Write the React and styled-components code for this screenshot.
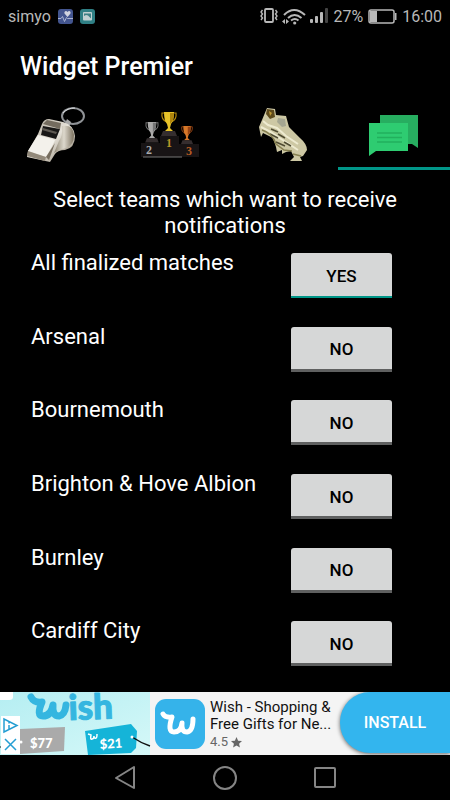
import React, { useState } from 'react';
import styled, { createGlobalStyle } from 'styled-components';

const GlobalStyle = createGlobalStyle`
  * {
    box-sizing: border-box;
  }

  body {
    margin: 0;
    background: #000;
    color: #fff;
    font-family: Roboto, "Liberation Sans", sans-serif;
  }

  h1, h2, p {
    margin: 0;
  }

  button {
    font-family: inherit;
    border: 0;
    padding: 0;
    cursor: pointer;
  }

  svg {
    display: block;
    flex: none;
    overflow: visible;
  }
`;

const Screen = styled.div`
  min-height: 100vh;
  display: flex;
  flex-direction: column;
`;

const StatusBar = styled.header`
  height: 32px;
  padding: 0 8px;
  display: flex;
  align-items: center;
  justify-content: space-between;
  color: #b8b8b8;
  font-size: 16px;
`;

const StatusGroup = styled.div`
  display: flex;
  align-items: center;
  gap: ${(props) => props.$gap}px;
`;

const Title = styled.h1`
  height: 66px;
  padding: 0 20px;
  font-size: 25px;
  font-weight: 500;
  line-height: 70px;
`;

const Tabs = styled.nav`
  display: grid;
  grid-template-columns: repeat(4, 1fr);
`;

const Tab = styled.button`
  height: 72px;
  padding-top: 2px;
  display: flex;
  align-items: center;
  justify-content: center;
  background: none;
  border-bottom: 3px solid ${(props) => (props.$active ? '#009688' : 'transparent')};
`;

const Heading = styled.h2`
  padding: 17px 40px 9px;
  font-size: 22px;
  font-weight: 400;
  line-height: 26px;
  text-align: center;
`;

const TeamList = styled.main`
  flex: 1;
  padding-bottom: 2px;
  display: flex;
  flex-direction: column;
`;

const TeamRow = styled.div`
  flex: 1;
  min-height: 64px;
  padding: 5px 58px 0 31px;
  display: flex;
  align-items: flex-start;
  justify-content: space-between;
`;

const TeamName = styled.span`
  font-size: 22px;
  line-height: 26px;
  margin-top: -3px;
`;

const Toggle = styled.button`
  width: 101px;
  height: 45px;
  padding-top: 3px;
  flex: none;
  border-radius: 3px 3px 0 0;
  border-bottom: ${(props) => (props.$on ? '2px solid #009688' : '3px solid #5f6060')};
  background: #d6d7d7;
  color: #000;
  font-size: 17px;
  font-weight: 500;
`;

const Ad = styled.aside`
  height: 63px;
  display: flex;
  background: #f4f4f4;
  color: #111;
`;

const AdBody = styled.div`
  flex: 1;
  min-width: 0;
  padding: 0 5px;
  display: flex;
  align-items: center;
  gap: 5px;
`;

const AdText = styled.div`
  padding-top: 3px;
  font-size: 15px;
  line-height: 17px;
  white-space: nowrap;
`;

const Rating = styled.p`
  display: flex;
  align-items: center;
  gap: 3px;
  color: #666;
  font-size: 13px;
  line-height: 18px;
`;

const Install = styled.button`
  width: 110px;
  height: 61px;
  flex: none;
  border-radius: 30px 0 0 30px;
  background: #33b5ee;
  box-shadow: 0 1px 4px #0009;
  color: #fff;
  font-size: 16px;
  font-weight: 500;
`;

const NavBar = styled.footer`
  height: 45px;
  display: flex;
  align-items: center;
  justify-content: center;
  gap: 70px;
`;

const NavButton = styled.button`
  background: none;
`;

const HealthIcon = () => (
  <svg width="15" height="15" viewBox="0 0 15 15">
    <rect width="15" height="15" rx="3" fill="#43558f" />
    <path d="M9.500 8 6.500 4.500C5.800 2.300 8.300 1.200 9.500 3 10.900 1.200 13.200 2.300 12.500 4.500Z" fill="#d0d3df" />
    <path d="M0 9.500h3l1.500-2 2 5 2-4 1 1H15" fill="none" stroke="#aab4d2" strokeWidth="1" />
  </svg>
);

const GalleryIcon = () => (
  <svg width="15" height="15" viewBox="0 0 15 15">
    <rect width="15" height="15" rx="3" fill="#2f7f84" />
    <rect x="3" y="3" width="9" height="8.500" rx="1" fill="#c0d0d1" />
    <path d="M4 4.500h7v5L8 6.500 6 6 4 7Z" fill="#3c7f84" />
  </svg>
);

const VibrateIcon = () => (
  <svg width="18" height="16" viewBox="0 0 18 16" fill="none" stroke="#b8b8b8">
    <rect x="5" y="1" width="8" height="13" rx="1" strokeWidth="1.800" />
    <path d="M2.500 2 1 4l1.500 2L1 8l1.500 2L1 12M15.500 2 17 4l-1.500 2L17 8l-1.500 2 1.500 2" strokeWidth="1.400" />
  </svg>
);

const WifiIcon = () => (
  <svg width="24" height="17" viewBox="0 0 24 17" fill="none" stroke="#b8b8b8" strokeWidth="2">
    <path d="M2 7Q12-3 23 7M6 10q6.500-6 13.500 0M9 12.500q4-3 7.500 0" />
    <circle cx="12.700" cy="15" r="1.600" fill="#b8b8b8" stroke="none" />
    <path d="m0 13.500 3-2.500v5zM4 11v5l3-2.500z" fill="#b8b8b8" stroke="none" />
  </svg>
);

const SignalIcon = () => (
  <svg width="19" height="16" viewBox="0 0 19 16" fill="#b8b8b8">
    <rect x="0" y="11" width="3" height="4" rx="1" />
    <rect x="5" y="8" width="3" height="7" rx="1" />
    <rect x="10" y="4" width="3" height="11" rx="1" />
    <rect x="15" y="0" width="3" height="15" rx="1" fill="#444" />
  </svg>
);

const BatteryIcon = () => (
  <svg width="31" height="15" viewBox="-1 0 31 15">
    <rect x="1" y="1" width="25" height="13" rx="2" fill="none" stroke="#b8b8b8" strokeWidth="1.500" />
    <path d="M2 2h7v11H2zM27 4h1.500v7H27z" fill="#b8b8b8" />
  </svg>
);

const WhistleIcon = () => (
  <svg width="62" height="60" viewBox="0 0 62 60">
    <defs>
      <linearGradient id="steel" x1="0" y1="0" x2="1" y2="1">
        <stop offset="0" stopColor="#a9a294" />
        <stop offset=".5" stopColor="#e6e2d9" />
        <stop offset="1" stopColor="#8a806e" />
      </linearGradient>
      <linearGradient id="barrel" x1="0" y1="0" x2="1" y2="0">
        <stop offset="0" stopColor="#8d8573" />
        <stop offset=".5" stopColor="#ddd8cc" />
        <stop offset="1" stopColor="#7b715f" />
      </linearGradient>
    </defs>
    <ellipse cx="48" cy="12" rx="11" ry="8" fill="none" stroke="#8f9296" strokeWidth="2" />
    <path d="M38 9q4-5 12-5" fill="none" stroke="#d5d7da" />
    <path d="m39 22 3-7 4 3-2 5" fill="#a9a9a9" />
    <path d="M17 20q2-5 7-5l14 3q11 3 12 14 0 12-10 14-7 0-10 4l-5 8L2 53l1-6 10-17Z" fill="url(#steel)" />
    <path d="M37 22q11-2 12 9 0 10-8 13-6 1-12 5l5-12q4-5 3-15Z" fill="url(#barrel)" />
    <path d="m18 20 4-4 14 3-1 6Z" fill="#746c5f" />
    <path d="m18 22 17 3-4 10-15-4Z" fill="#181716" />
    <path d="m18 24 14 4-1 2-14-4Z" fill="#5f5a53" />
    <path d="m13 31 17 5q-3 7-9 17L3 47Z" fill="#f3f1eb" />
    <path d="m3 47 18 6-1 4L2 52Z" fill="#92897a" />
    <path d="m21 53 9-14-6 17Z" fill="#766d5e" />
  </svg>
);

const Cup = ({ x, y, scale, color, shade }) => (
  <g transform={`translate(${x} ${y}) scale(${scale})`}>
    <path d="M-5 1h-2q-1 7 5 9M5 1h2q1 7-5 9" fill="none" stroke={shade} strokeWidth="1.200" />
    <path d="M-5 0H5q0 9-3 12l-1 4 3 3h-8l3-3-1-4Q-5 9-5 0Z" fill={color} />
    <path d="M1 1h4q0 8-4 11Z" fill={shade} />
    <path d="M-6 19H6l2 5H-8Z" fill="#352e2f" />
  </g>
);

const PodiumText = styled.text`
  font-family: "Liberation Serif", serif;
  font-size: 12px;
  font-weight: 700;
  text-anchor: middle;
`;

const PodiumIcon = () => (
  <svg width="60" height="56" viewBox="-1 1 60 56">
    <path d="M1 38h19v-7h19v8h20v13H1Z" fill="#181415" />
    <Cup x={12} y={17} scale={0.85} color="#aaa9a8" shade="#747474" />
    <Cup x={29} y={7} scale={1} color="#e8c329" shade="#af850c" />
    <Cup x={47} y={21} scale={0.75} color="#d87829" shade="#974314" />
    <PodiumText x="9" y="49" fill="#aaa">2</PodiumText>
    <PodiumText x="29" y="42" fill="#b99728">1</PodiumText>
    <PodiumText x="49" y="50" fill="#b85c22">3</PodiumText>
    <path d="M3 52h39" stroke="#777" />
  </svg>
);

const BootIcon = () => (
  <svg width="52" height="58" viewBox="-1 0 52 58">
    <path
      d="M11 3l8 1 1 6 10 1 3 11 11 11q7 6 7 12l-4 6-3 1 2 4H34l4-4-3-6-5 1-4 2v-4l-5 2-1-5-3-9-10-5-2 4-2-10 3-7Z"
      fill="#cdc8a4"
    />
    <path d="m11 4 7 1 1 7-5 2-4-5Z" fill="#5d4a1c" />
    <path d="m13 6 3 2-2 3Z" fill="#c09a35" />
    <path d="m22 13 7 1 1 7-4 1-5-5Z" fill="#a5a691" />
    <path d="m7 16 5 4 9 3 9 8 12 8M5 22l10 5 7 5 11 7 9 6" fill="none" stroke="#eeebd0" strokeWidth="2" />
    <path d="m15 24 7 3M14 29l8 4M22 29l7 4M20 37l9 4M28 37l7 4" stroke="#4f4b32" strokeWidth="1.500" />
    <path d="M6 25q10 3 14 14l8 6 8 1M37 49l8 2" fill="none" stroke="#878051" strokeWidth="1.500" />
  </svg>
);

const ChatIcon = () => (
  <svg width="50" height="45" viewBox="0 -4 50 45">
    <path d="M11 0h38v33l-6-4H11Z" fill="#27ae60" />
    <path d="M0 8h39v28H7l-7 5Z" fill="#2ecc71" />
    <path d="M8 18h25M8 22.500h25M8 27h25" stroke="#22b05d" strokeWidth="1.500" />
  </svg>
);

const TagText = styled.text`
  fill: #fff;
  font-family: Lato, sans-serif;
  font-size: ${(props) => props.$size}px;
  font-weight: 900;
`;

const WishText = styled(TagText)`
  fill: #35b6e0;
  stroke: #35b6e0;
  stroke-width: 1px;
  stroke-linejoin: round;
`;

const AdArt = () => (
  <svg width="150" height="63" viewBox="0 0 150 63">
    <defs>
      <linearGradient id="sky" x1="0" y1="0" x2="1" y2="1">
        <stop offset="0" stopColor="#b5eef2" />
        <stop offset="1" stopColor="#d5f8f8" />
      </linearGradient>
    </defs>
    <rect width="150" height="63" fill="url(#sky)" />
    <path d="M0 0h13v5q0 3-4 3H0Z" fill="#fff" />
    <path
      d="M31 5q3 6 11 5-6 14 1 14 8 0 10-11-1 11 6 11 6-1 7-11"
      fill="none"
      stroke="#35b6e0"
      strokeWidth="7"
      strokeLinecap="round"
      strokeLinejoin="round"
    />
    <WishText x="69" y="28" $size={35} transform="rotate(-2 69 28)">ish</WishText>
    <path d="M20 37 65 35l-1 24-44 3Z" fill="#aaa" />
    <path d="M0 55h2" stroke="#111" />
    <circle cx="21" cy="50" r="1.500" fill="#fff" />
    <TagText x="30" y="56" $size={13}>$77</TagText>
    <path d="m85 39 46-7 6 7-1 17-5 5-43 2Z" fill="#15b4d8" />
    <path d="M132 45q9 6 18 9" fill="none" stroke="#111" strokeWidth="1.500" />
    <circle cx="132" cy="45" r="1.500" fill="#fff" />
    <path d="m88 42 3 1q-1 5 1 4 2 0 2-3 0 3 2 2 1 0 1-4" fill="none" stroke="#fff" strokeWidth="1.500" />
    <TagText x="100" y="57" $size={13} transform="rotate(-4 100 57)">$21</TagText>
    <path d="M1 24h19v38H1Z" fill="#fff" />
    <g fill="none" stroke="#249ed3" strokeWidth="1.500">
      <path d="M4 27v13l13-6.500ZM9 33v4M9 30v1.500M5 47l11 11M16 47 5 58" />
    </g>
  </svg>
);

const WishIcon = () => (
  <svg width="50" height="50" viewBox="0 0 50 50">
    <rect width="50" height="50" rx="11" fill="#35b3ea" />
    <path
      d="M8 15q2 4 9 3-5 15 2 15 7 0 8-9-1 9 5 9 6-1 6-13"
      fill="none"
      stroke="#fff"
      strokeWidth="5"
      strokeLinecap="round"
      strokeLinejoin="round"
    />
  </svg>
);

const StarIcon = () => (
  <svg width="11" height="11" viewBox="0 0 24 24" fill="#666">
    <path d="m12 0 3.500 8 8.500.8-6.400 5.700 1.900 8.500-7.500-4.500L4.500 23l1.900-8.500L0 8.800 8.500 8Z" />
  </svg>
);

const tabs = [
  { id: 'matches', Icon: WhistleIcon },
  { id: 'standings', Icon: PodiumIcon },
  { id: 'scorers', Icon: BootIcon },
  { id: 'notifications', Icon: ChatIcon },
];

const teams = [
  'All finalized matches',
  'Arsenal',
  'Bournemouth',
  'Brighton & Hove Albion',
  'Burnley',
  'Cardiff City',
];

const App = () => {
  const [active, setActive] = useState('notifications');
  const [selected, setSelected] = useState({ 'All finalized matches': true });

  const toggle = (team) => setSelected({ ...selected, [team]: !selected[team] });

  return (
    <Screen>
      <GlobalStyle />
      <StatusBar>
        <StatusGroup $gap={7}>
          simyo
          <HealthIcon />
          <GalleryIcon />
        </StatusGroup>
        <StatusGroup $gap={4}>
          <VibrateIcon />
          <WifiIcon />
          <SignalIcon />
          27%
          <BatteryIcon />
          16:00
        </StatusGroup>
      </StatusBar>
      <Title>Widget Premier</Title>
      <Tabs>
        {tabs.map(({ id, Icon }) => (
          <Tab key={id} aria-label={id} $active={id === active} onClick={() => setActive(id)}>
            <Icon />
          </Tab>
        ))}
      </Tabs>
      <Heading>Select teams which want to receive notifications</Heading>
      <TeamList>
        {teams.map((team, i) => (
          <TeamRow key={team}>
            <TeamName id={`team-${i}`}>{team}</TeamName>
            <Toggle
              aria-describedby={`team-${i}`}
              aria-pressed={!!selected[team]}
              $on={selected[team]}
              onClick={() => toggle(team)}
            >
              {selected[team] ? 'YES' : 'NO'}
            </Toggle>
          </TeamRow>
        ))}
      </TeamList>
      <Ad>
        <AdArt />
        <AdBody>
          <WishIcon />
          <AdText>
            <p>Wish - Shopping &amp;</p>
            <p>Free Gifts for Ne...</p>
            <Rating>4.5<StarIcon /></Rating>
          </AdText>
        </AdBody>
        <Install>INSTALL</Install>
      </Ad>
      <NavBar>
        <NavButton aria-label="Back">
          <svg width="30" height="26" viewBox="0 0 30 26" fill="none" stroke="#858585" strokeWidth="2">
            <path d="M24 2v21L6 13Z" strokeLinejoin="round" />
          </svg>
        </NavButton>
        <NavButton aria-label="Home">
          <svg width="30" height="26" viewBox="0 0 30 26" fill="none" stroke="#858585" strokeWidth="2">
            <circle cx="15" cy="13" r="11" />
          </svg>
        </NavButton>
        <NavButton aria-label="Recent apps">
          <svg width="30" height="26" viewBox="0 0 30 26" fill="none" stroke="#858585" strokeWidth="2">
            <rect x="5" y="3" width="20" height="19" rx="1" />
          </svg>
        </NavButton>
      </NavBar>
    </Screen>
  );
};

export default App;
